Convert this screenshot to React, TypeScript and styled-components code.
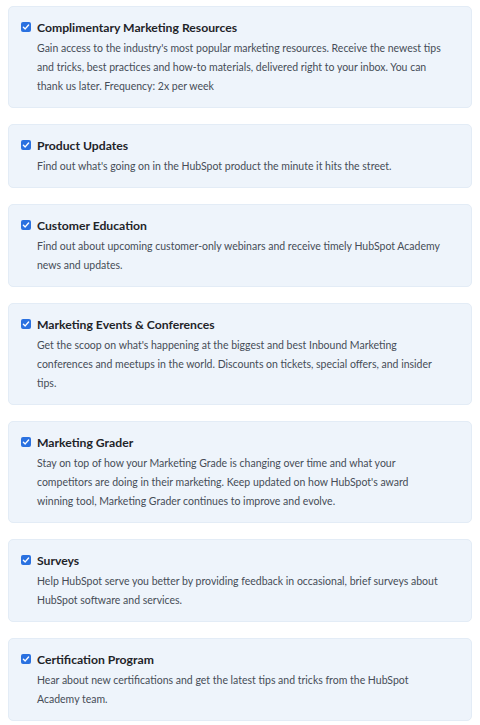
import React from "react";
import styled, { createGlobalStyle } from "styled-components";

const Global = createGlobalStyle`
  html, body { margin: 0; padding: 0; background: #ffffff; }
  body { font-family: Lato, "Noto Sans", sans-serif; }
`;

const Page = styled.div`
  display: flex;
  flex-direction: column;
  gap: 16px;
  padding: 6px 8px 5px 8px;
`;

const Card = styled.label`
  display: grid;
  grid-template-columns: 10px 1fr;
  column-gap: 6px;
  align-items: start;
  background: #eef4fb;
  border: 1px solid #e3ecf6;
  border-radius: 5px;
  padding: 12px 25px 11px 12px;
`;

const Box = styled.span`
  width: 10px;
  height: 10px;
  margin-top: 3px;
  border-radius: 2px;
  background: #2a71e0;
  display: flex;
  align-items: center;
  justify-content: center;
`;

const Body = styled.div`
  display: flex;
  flex-direction: column;
  gap: 3px;
`;

const Title = styled.div`
  font-weight: 700;
  font-size: 12.2px;
  line-height: 17px;
  color: #1f2429;
`;

const Desc = styled.div`
  font-size: 10.5px;
  line-height: 19px;
  color: #464d57;
`;

const items = [
  {
    t: "Complimentary Marketing Resources",
    d: "Gain access to the industry's most popular marketing resources. Receive the newest tips and tricks, best practices and how-to materials, delivered right to your inbox. You can thank us later. Frequency: 2x per week",
  },
  {
    t: "Product Updates",
    d: "Find out what's going on in the HubSpot product the minute it hits the street.",
  },
  {
    t: "Customer Education",
    d: "Find out about upcoming customer-only webinars and receive timely HubSpot Academy news and updates.",
  },
  {
    t: "Marketing Events & Conferences",
    d: "Get the scoop on what's happening at the biggest and best Inbound Marketing conferences and meetups in the world. Discounts on tickets, special offers, and insider tips.",
  },
  {
    t: "Marketing Grader",
    d: "Stay on top of how your Marketing Grade is changing over time and what your competitors are doing in their marketing. Keep updated on how HubSpot's award winning tool, Marketing Grader continues to improve and evolve.",
  },
  {
    t: "Surveys",
    d: "Help HubSpot serve you better by providing feedback in occasional, brief surveys about HubSpot software and services.",
  },
  {
    t: "Certification Program",
    d: "Hear about new certifications and get the latest tips and tricks from the HubSpot Academy team.",
  },
];

const Check = () => (
  <svg width="8" height="8" viewBox="0 0 8 8">
    <path d="M1.4 4.2 L3.2 5.9 L6.6 2" fill="none" stroke="#fff" strokeWidth="1.4" strokeLinecap="round" strokeLinejoin="round" />
  </svg>
);

export default function App() {
  return (
    <>
      <Global />
      <Page>
        {items.map((it) => (
          <Card key={it.t}>
            <Box>
              <Check />
            </Box>
            <Body>
              <Title>{it.t}</Title>
              <Desc>{it.d}</Desc>
            </Body>
          </Card>
        ))}
      </Page>
    </>
  );
}
